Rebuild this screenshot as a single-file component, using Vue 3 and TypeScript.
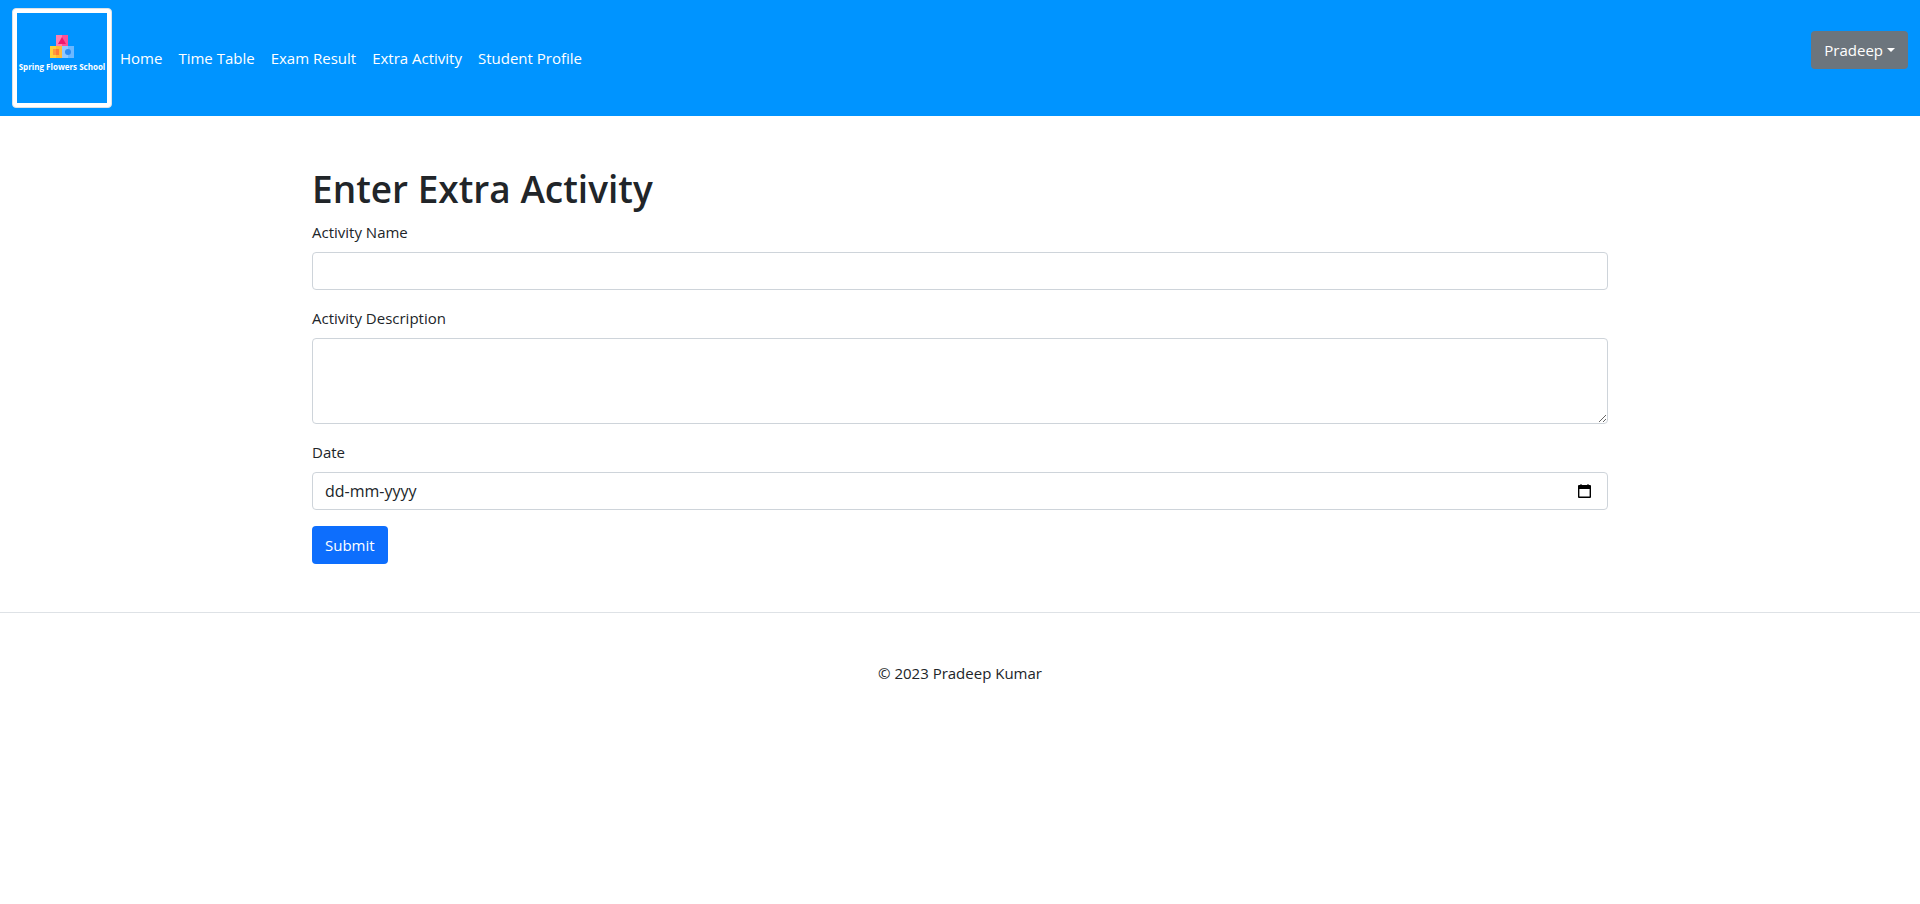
<script setup lang="ts">
import { ref } from 'vue'

interface NavLink {
  label: string
  href: string
}

const links: NavLink[] = [
  { label: 'Home', href: '#home' },
  { label: 'Time Table', href: '#time-table' },
  { label: 'Exam Result', href: '#exam-result' },
  { label: 'Extra Activity', href: '#extra-activity' },
  { label: 'Student Profile', href: '#student-profile' },
]

const activityName = ref('')
const description = ref('')
const date = ref('')
</script>

<template>
  <div class="page">
    <header class="navbar">
      <a class="brand" href="#home" aria-label="Spring Flowers School">
        <svg class="logo" viewBox="0 0 90 90" aria-hidden="true">
          <rect x="39" y="22" width="6" height="12" fill="#ff80b0" />
          <rect x="45" y="22" width="6" height="12" fill="#ff5096" />
          <path d="M45 24l4 7h-8z" fill="#f0186e" />
          <rect x="33" y="33" width="6" height="12" fill="#ffd13c" />
          <rect x="39" y="33" width="6" height="12" fill="#ffba38" />
          <rect x="36" y="36" width="6" height="6" fill="#ff9a3c" />
          <rect x="39" y="36" width="3" height="6" fill="#ff7b36" />
          <rect x="45" y="33" width="6" height="12" fill="#90c8ff" />
          <rect x="51" y="33" width="6" height="12" fill="#6cb8ff" />
          <circle cx="51" cy="39" r="3" fill="#2b8cf4" />
          <text x="45" y="57" text-anchor="middle">Spring Flowers School</text>
        </svg>
      </a>
      <nav class="links">
        <a v-for="link in links" :key="link.label" :href="link.href">{{ link.label }}</a>
      </nav>
      <button class="btn user" type="button" aria-haspopup="true">
        Pradeep<span class="caret"></span>
      </button>
    </header>

    <main class="container">
      <h1>Enter Extra Activity</h1>
      <form @submit.prevent>
        <div class="field">
          <label for="activity-name">Activity Name</label>
          <input id="activity-name" v-model="activityName" class="control" type="text" />
        </div>
        <div class="field">
          <label for="description">Activity Description</label>
          <textarea id="description" v-model="description" class="control" rows="3"></textarea>
        </div>
        <div class="field">
          <label for="date">Date</label>
          <div class="control date">
            <input id="date" v-model="date" type="text" placeholder="dd-mm-yyyy" />
            <button type="button" aria-label="Choose date">
              <svg viewBox="0 0 16 16" aria-hidden="true">
                <path
                  d="M3.500 1h1v1h6V1h1v1h1.500q1 0 1 1v11q0 1-1 1h-11q-1 0-1-1V3q0-1 1-1h1.500zM2.400 6v7.600h10.200V6z"
                  fill="#000"
                  fill-rule="evenodd"
                />
              </svg>
            </button>
          </div>
        </div>
        <button class="btn submit" type="submit">Submit</button>
      </form>
    </main>

    <footer>© 2023 Pradeep Kumar</footer>
  </div>
</template>

<style>
body {
  margin: 0;
  background: #fff;
}
</style>

<style scoped>
.page,
.page * {
  box-sizing: border-box;
}

.page {
  font-family: 'Segoe UI', 'Open Sans', 'Noto Sans', sans-serif;
  font-size: 15px;
  line-height: 24px;
  color: #212529;
}

.navbar {
  display: flex;
  align-items: center;
  padding: 8px 12px;
  background: #0094ff;
}

.brand {
  display: block;
  width: 100px;
  height: 100px;
  padding: 4px;
  border: 1px solid #dee2e6;
  border-radius: 4px;
  background: #fff;
}

.logo {
  display: block;
  width: 100%;
  height: 100%;
  background: #0094ff;
}

.logo text {
  font-family: 'Open Sans', sans-serif;
  font-size: 8px;
  font-weight: 700;
  fill: #fff;
}

.links {
  display: flex;
  flex-grow: 1;
}

.links a {
  padding: 8px;
  color: #fff;
  text-decoration: none;
}

.btn {
  padding: 6px 12px;
  border: 1px solid transparent;
  border-radius: 4px;
  color: #fff;
  font: inherit;
  cursor: pointer;
}

.user {
  display: flex;
  align-items: center;
  gap: 4px;
  margin-bottom: 16px;
  background: #6c757d;
}

.caret {
  border-top: 4px solid #fff;
  border-right: 4px solid transparent;
  border-left: 4px solid transparent;
}

.container {
  max-width: 1320px;
  margin: 0 auto;
  padding: 48px 12px;
}

h1 {
  margin: 0 0 6px;
  font-size: 37px;
  font-weight: 600;
  line-height: 50px;
}

.field {
  margin-bottom: 16px;
}

label {
  display: block;
  width: fit-content;
  margin-bottom: 8px;
}

.control {
  display: block;
  width: 100%;
  padding: 6px 12px;
  border: 1px solid #ced4da;
  border-radius: 4px;
  background: #fff;
  color: #212529;
  font: inherit;
}

textarea.control {
  resize: vertical;
}

.date {
  display: flex;
  align-items: center;
}

.date input {
  flex-grow: 1;
  height: 24px;
  padding: 0;
  border: 0;
  outline: 0;
  background: transparent;
  color: inherit;
  font: inherit;
  font-size: 16px;
}

.date input::placeholder {
  color: #212529;
  opacity: 1;
}

.date button {
  width: 20px;
  height: 16px;
  padding: 0 2px;
  border: 0;
  background: transparent;
}

.date svg {
  display: block;
  width: 16px;
  height: 16px;
}

.submit {
  display: block;
  background: #0d6efd;
}

footer {
  padding: 48px 12px;
  border-top: 1px solid #dee2e6;
  text-align: center;
}
</style>
